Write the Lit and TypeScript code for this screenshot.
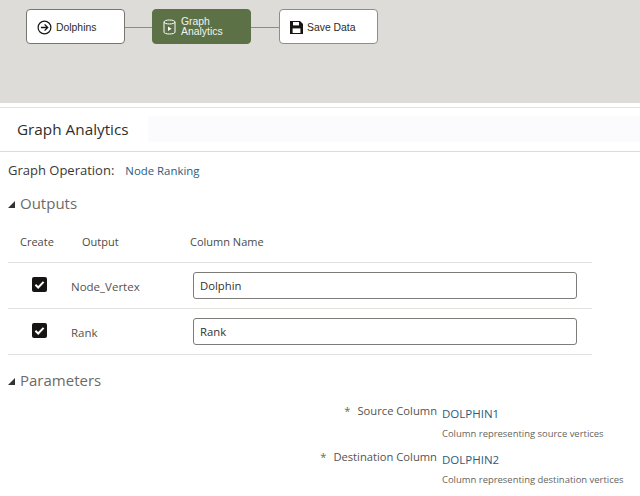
import { LitElement, html, css, svg } from "lit";
import { customElement } from "lit/decorators.js";

const arrowIcon = svg`<svg width="15" height="15" viewBox="0 0 15 15" fill="none" stroke="#161513" stroke-width="1.2">
  <circle cx="7.5" cy="7.5" r="6.4"></circle>
  <path d="M3.9 7.5h6.6M7.6 4.4l3.1 3.1-3.1 3.1" stroke-width="1.3"></path>
</svg>`;

const graphIcon = svg`<svg width="13" height="16" viewBox="0 0 13 16" fill="none" stroke="#fff" stroke-width="1">
  <path d="M1 3v10.2c0 1 2.4 1.8 5.5 1.8s5.5-.8 5.5-1.8V3"></path>
  <ellipse cx="6.5" cy="3" rx="5.5" ry="2"></ellipse>
  <path d="M5 7.6l3.6 2.2L5 12z" fill="#fff" stroke="none"></path>
</svg>`;

const saveIcon = svg`<svg width="13" height="13" viewBox="0 0 13 13">
  <path d="M0 0h10l3 3v10H0z" fill="#161513"></path>
  <rect x="3" y="1" width="6" height="3.4" fill="#fff"></rect>
  <rect x="2.6" y="7.4" width="7.8" height="4.6" fill="#fff"></rect>
</svg>`;

const checkIcon = svg`<svg width="15" height="15" viewBox="0 0 15 15">
  <rect width="15" height="15" rx="2" fill="#161513"></rect>
  <path d="M3.4 7.8l2.8 2.7 5.4-5.6" fill="none" stroke="#fff" stroke-width="2"></path>
</svg>`;

const outputs = [
  { name: "Node_Vertex", column: "Dolphin" },
  { name: "Rank", column: "Rank" },
];

const params = [
  { label: "Source Column", value: "DOLPHIN1", hint: "Column representing source vertices" },
  { label: "Destination Column", value: "DOLPHIN2", hint: "Column representing destination vertices" },
];

@customElement("app-root")
export class AppRoot extends LitElement {
  static styles = css`
    :host {
      display: block;
      width: 640px;
      height: 496px;
      overflow: hidden;
      background: #fff;
      font-family: "Open Sans", "Noto Sans", sans-serif;
      color: #3f3d3a;
    }
    .canvas {
      height: 103px;
      box-sizing: border-box;
      padding: 9px 0 0 26px;
      background: #dedcd8;
      display: flex;
      align-items: flex-start;
    }
    .node {
      width: 99px;
      height: 35px;
      box-sizing: border-box;
      border: 1px solid #77756f;
      border-radius: 4px;
      background: #fff;
      display: flex;
      align-items: center;
      gap: 4px;
      padding: 1px 0 0 10px;
      font-family: "Liberation Sans", Arial, sans-serif;
      font-size: 10.4px;
      line-height: 10.5px;
      color: #2c2b29;
    }
    .node svg {
      flex: none;
    }
    .node span {
      padding-top: 2px;
    }
    .node.active {
      background: #5c7146;
      border-color: #5c7146;
      color: #f1f3ec;
      gap: 5px;
    }
    .node.active span {
      padding-top: 0;
    }
    .node.save {
      border-color: #8f8d89;
    }
    .link {
      width: 27px;
      height: 1px;
      margin-top: 18px;
      background: #8d8b85;
    }
    .link.long {
      width: 28px;
    }
    .title-bar {
      margin-top: 4px;
      height: 45px;
      box-sizing: border-box;
      border-top: 1px solid #e4e3e0;
      border-bottom: 1px solid #dcdbd8;
      display: flex;
      align-items: center;
    }
    .title {
      width: 131px;
      padding: 0 0 2px 17px;
      font-size: 15.3px;
      color: #2f2e2b;
      flex: none;
    }
    .strip {
      flex: 1;
      height: 26px;
      margin-top: -1px;
      background: #fbfbfd;
    }
    .operation {
      display: flex;
      align-items: baseline;
      padding: 9px 0 0 8px;
      height: 23px;
      font-size: 13px;
      color: #393835;
    }
    .operation span {
      margin-left: 11px;
      font-size: 11.4px;
      color: #2b5b80;
    }
    .section {
      display: flex;
      align-items: center;
      gap: 5px;
      padding-left: 8px;
      font-size: 15px;
      color: #6d6b67;
    }
    .section i {
      width: 0;
      height: 0;
      border-left: 7px solid transparent;
      border-bottom: 7px solid #33322f;
      margin-top: 2px;
    }
    .outputs-head {
      margin-top: 9px;
    }
    .table {
      width: 584px;
      margin: 0 0 0 8px;
      display: grid;
      grid-template-columns: 63px 119px 1fr;
      font-size: 11.5px;
      color: #55534f;
    }
    .th {
      height: 41px;
      display: flex;
      align-items: center;
      margin-top: 8px;
      font-size: 11px;
      color: #4c4a47;
    }
    .th.create {
      padding-left: 12px;
    }
    .th.output {
      padding-left: 11px;
    }
    .row {
      grid-column: 1 / -1;
      display: grid;
      grid-template-columns: subgrid;
      align-items: center;
      height: 46px;
      box-sizing: border-box;
      border-top: 1px solid #e3e2df;
    }
    .row:last-child {
      border-bottom: 1px solid #e3e2df;
      height: 47px;
    }
    .check {
      display: flex;
      padding-left: 24px;
      height: 15px;
      margin-bottom: 2px;
    }
    .name {
      padding-top: 1px;
    }
    .input {
      margin-left: 3px;
      width: 384px;
      height: 27px;
      box-sizing: border-box;
      border: 1px solid #7e7c78;
      border-radius: 3px;
      padding: 0 6px;
      display: flex;
      align-items: center;
      font-size: 11.3px;
      color: #33322f;
    }
    .params-head {
      margin-top: 15px;
    }
    .params {
      margin-top: 13px;
      display: grid;
      grid-template-columns: 437px 1fr;
      column-gap: 5px;
    }
    .label {
      text-align: right;
      font-size: 11.2px;
      line-height: 16px;
      color: #55534f;
    }
    .label b {
      font-weight: 400;
      color: #5c7146;
      margin-right: 7px;
    }
    .value {
      font-size: 11.5px;
      line-height: 16px;
      margin-top: 3px;
      color: #2b5b80;
    }
    .hint {
      font-size: 9.45px;
      line-height: 12px;
      margin-top: 6px;
      color: #66645f;
    }
    .param-gap {
      margin-bottom: 9px;
    }
  `;

  render() {
    return html`
      <div class="canvas">
        <div class="node">${arrowIcon}<span>Dolphins</span></div>
        <div class="link"></div>
        <div class="node active">${graphIcon}<span>Graph<br />Analytics</span></div>
        <div class="link long"></div>
        <div class="node save">${saveIcon}<span>Save Data</span></div>
      </div>

      <div class="title-bar">
        <div class="title">Graph Analytics</div>
        <div class="strip"></div>
      </div>

      <div class="operation">Graph Operation:<span>Node Ranking</span></div>

      <div class="section outputs-head"><i></i>Outputs</div>
      <div class="table">
        <div class="th create">Create</div>
        <div class="th output">Output</div>
        <div class="th">Column Name</div>
        ${outputs.map(
          (o) => html`
            <div class="row">
              <div class="check">${checkIcon}</div>
              <div class="name">${o.name}</div>
              <div class="input">${o.column}</div>
            </div>
          `
        )}
      </div>

      <div class="section params-head"><i></i>Parameters</div>
      <div class="params">
        ${params.map(
          (p) => html`
            <div class="label"><b>*</b>${p.label}</div>
            <div class="param-gap">
              <div class="value">${p.value}</div>
              <div class="hint">${p.hint}</div>
            </div>
          `
        )}
      </div>
    `;
  }
}
